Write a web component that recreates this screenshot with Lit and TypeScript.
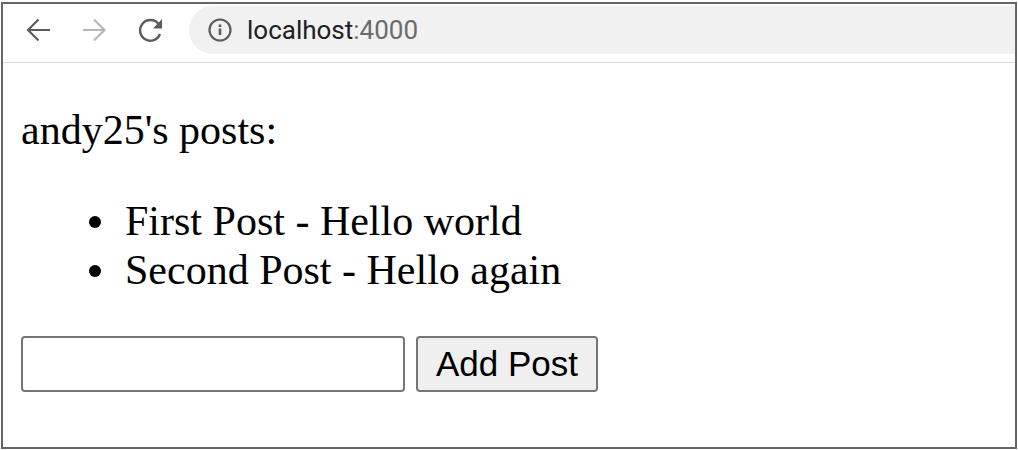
import { LitElement, html, css } from "lit";
import { customElement } from "lit/decorators.js";

@customElement("app-root")
class AppRoot extends LitElement {
  static styles = css`
    :host { display: block; padding: 2px 1px; background: #fff; color: #000; }
    * { box-sizing: border-box; }
    .window { border: 2px solid #666; min-height: calc(100vh - 3px); }
    .toolbar { display: flex; align-items: center; height: 59px; padding: 0 0 6px 18px; border-bottom: 1px solid #dcdcdc; }
    .nav { display: flex; padding: 0; margin-right: 22px; border: 0; background: none; }
    svg { display: block; }
    .address { display: flex; flex: 1; align-items: center; height: 48px; padding-left: 19px; gap: 15px; border-radius: 24px 0 0 24px; background: #f1f1f1; }
    .url { font: 26px/32px Roboto, sans-serif; color: #202124; }
    .port { color: #6b6b6b; }
    .page { padding: 43px 18px; font: 42px/49px "Liberation Serif", serif; }
    .title { margin: 0 0 42px; }
    .posts { margin: 0 0 41px; padding-left: 68px; list-style: none; }
    .posts li { display: flex; align-items: center; gap: 24px; }
    .posts li::before { content: ""; width: 12px; height: 12px; border-radius: 50%; background: #000; }
    .form { display: flex; gap: 11px; }
    .field { width: 384px; height: 56px; border: 2px solid #767676; border-radius: 4px; background: #fff; font: 35px "Liberation Sans", sans-serif; }
    .submit { height: 56px; padding: 0 18px; border: 2px solid #767676; border-radius: 4px; background: #efefef; color: #000; font: 35px "Liberation Sans", sans-serif; }
  `;

  render() {
    return html`
      <div class="window">
        <header class="toolbar">
          <button class="nav" aria-label="Back"><svg width="34" height="34" viewBox="0 0 34 34" fill="none" stroke="#5c5c5c" stroke-width="2.2"><path d="M29 17H7.500M17.500 6.500L7 17l10.500 10.500" /></svg></button>
          <button class="nav" aria-label="Forward"><svg width="34" height="34" viewBox="0 0 34 34" fill="none" stroke="#b8b8b8" stroke-width="2.2"><path d="M6 17h21.500M17 6.500L27.500 17 17 27.500" /></svg></button>
          <button class="nav" aria-label="Reload"><svg width="34" height="34" viewBox="0 0 34 34"><path d="M25.300 10.800A10.300 10.300 0 1 0 27 21" fill="none" stroke="#5c5c5c" stroke-width="2.4" /><path d="M29 6v9.500h-9z" fill="#5c5c5c" /></svg></button>
          <div class="address">
            <svg width="24" height="24" viewBox="0 0 24 24" fill="none" stroke="#5c5c5c" stroke-width="2.2"><circle cx="12" cy="12" r="10.500" /><path d="M12 10.500v6.500M12 6.500v2.500" stroke-width="2.600" /></svg>
            <span class="url">localhost<span class="port">:4000</span></span>
          </div>
        </header>
        <main class="page">
          <p class="title">andy25's posts:</p>
          <ul class="posts">
            <li>First Post - Hello world</li>
            <li>Second Post - Hello again</li>
          </ul>
          <form class="form" @submit=${(e: Event) => e.preventDefault()}>
            <input class="field" type="text" aria-label="New post" />
            <button class="submit">Add Post</button>
          </form>
        </main>
      </div>
    `;
  }
}
